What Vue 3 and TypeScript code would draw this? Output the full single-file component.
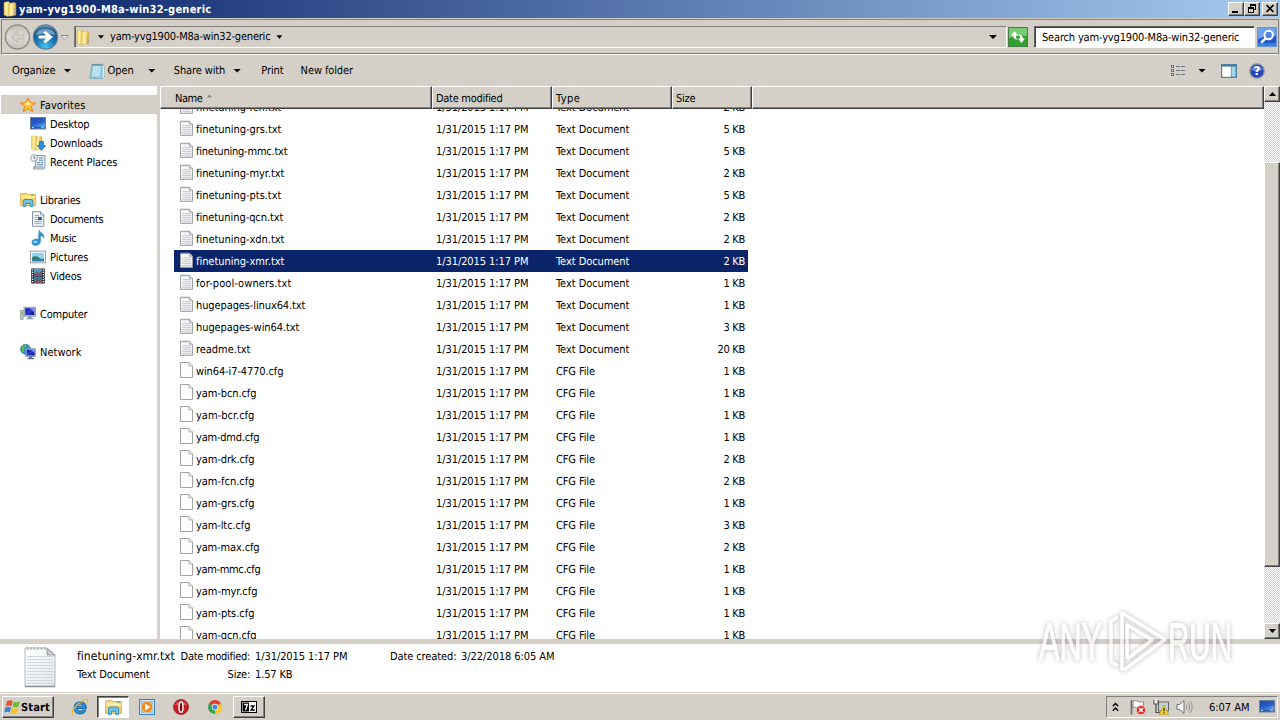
<script setup lang="ts">
interface FileRow {
  name: string
  w: number
  size: string
  cfg?: boolean
  selected?: boolean
}

// Spreads or tightens a label's letters so that it fills a given width.
const vFit = {
  mounted(el: HTMLElement, binding: { value: number }) {
    const range = document.createRange()
    range.selectNodeContents(el)
    const natural = range.getBoundingClientRect().width
    const count = (el.textContent ?? '').length
    if (count > 0) el.style.letterSpacing = `${(binding.value - 0.6 - natural) / count}px`
  },
}

const files: FileRow[] = [
  { name: 'finetuning-fcn.txt', w: 86, size: '2 KB' },
  { name: 'finetuning-grs.txt', w: 86, size: '5 KB' },
  { name: 'finetuning-mmc.txt', w: 92, size: '5 KB' },
  { name: 'finetuning-myr.txt', w: 89, size: '2 KB' },
  { name: 'finetuning-pts.txt', w: 86, size: '5 KB' },
  { name: 'finetuning-qcn.txt', w: 88, size: '2 KB' },
  { name: 'finetuning-xdn.txt', w: 89, size: '2 KB' },
  { name: 'finetuning-xmr.txt', w: 89, size: '2 KB', selected: true },
  { name: 'for-pool-owners.txt', w: 96, size: '1 KB' },
  { name: 'hugepages-linux64.txt', w: 110, size: '1 KB' },
  { name: 'hugepages-win64.txt', w: 104, size: '3 KB' },
  { name: 'readme.txt', w: 55, size: '20 KB' },
  { name: 'win64-i7-4770.cfg', w: 88, size: '1 KB', cfg: true },
  { name: 'yam-bcn.cfg', w: 61, size: '1 KB', cfg: true },
  { name: 'yam-bcr.cfg', w: 59, size: '1 KB', cfg: true },
  { name: 'yam-dmd.cfg', w: 64, size: '1 KB', cfg: true },
  { name: 'yam-drk.cfg', w: 59, size: '2 KB', cfg: true },
  { name: 'yam-fcn.cfg', w: 59, size: '2 KB', cfg: true },
  { name: 'yam-grs.cfg', w: 59, size: '1 KB', cfg: true },
  { name: 'yam-ltc.cfg', w: 55, size: '3 KB', cfg: true },
  { name: 'yam-max.cfg', w: 64, size: '2 KB', cfg: true },
  { name: 'yam-mmc.cfg', w: 65, size: '1 KB', cfg: true },
  { name: 'yam-myr.cfg', w: 62, size: '1 KB', cfg: true },
  { name: 'yam-pts.cfg', w: 59, size: '1 KB', cfg: true },
  { name: 'yam-qcn.cfg', w: 61, size: '1 KB', cfg: true },
]

interface NavItem { label: string; icon: string; w: number; root?: boolean; active?: boolean; gap?: boolean }
const nav: NavItem[] = [
  { label: 'Favorites', icon: 'star', w: 46, root: true, active: true },
  { label: 'Desktop', icon: 'desktop', w: 40 },
  { label: 'Downloads', icon: 'downloads', w: 53 },
  { label: 'Recent Places', icon: 'recent', w: 68 },
  { label: 'Libraries', icon: 'libraries', w: 41, root: true, gap: true },
  { label: 'Documents', icon: 'documents', w: 54 },
  { label: 'Music', icon: 'music', w: 27 },
  { label: 'Pictures', icon: 'pictures', w: 39 },
  { label: 'Videos', icon: 'videos', w: 32 },
  { label: 'Computer', icon: 'computer', w: 48, root: true, gap: true },
  { label: 'Network', icon: 'network', w: 42, root: true, gap: true },
]
</script>

<template>
  <div class="screen">
    <svg class="defs" width="0" height="0" aria-hidden="true">
      <defs>
        <linearGradient id="gFolder" x1="0" x2="1"><stop offset="0" stop-color="#f0cf55" /><stop offset=".45" stop-color="#fff3b0" /><stop offset="1" stop-color="#d9ac2c" /></linearGradient>
        <linearGradient id="gScreen" x1="0" y1="0" x2="1" y2="1"><stop offset="0" stop-color="#2450b8" /><stop offset=".55" stop-color="#2f72dc" /><stop offset="1" stop-color="#7cc0f0" /></linearGradient>
        <linearGradient id="gMon" x1="0" y1="0" x2="1" y2="1"><stop offset="0" stop-color="#10109a" /><stop offset=".5" stop-color="#2b3fd6" /><stop offset="1" stop-color="#0b0b78" /></linearGradient>
        <linearGradient id="gGrey" x1="0" y1="0" x2="0" y2="1"><stop offset="0" stop-color="#c3bfb8" /><stop offset=".5" stop-color="#dedbd6" /><stop offset="1" stop-color="#c4c0b9" /></linearGradient>
        <radialGradient id="gBlue" cx=".5" cy=".9" r=".9"><stop offset="0" stop-color="#45c3ee" /><stop offset=".45" stop-color="#1a78b4" /><stop offset=".8" stop-color="#1b5488" /><stop offset="1" stop-color="#7fa8c8" /></radialGradient>
        <linearGradient id="gPage" x1="0" y1="0" x2="1" y2="1"><stop offset="0" stop-color="#ffffff" /><stop offset="1" stop-color="#e4e7eb" /></linearGradient>
        <symbol id="folder" viewBox="0 0 16 16">
          <path d="M2 1.5 6.5.5 8 2v12l-2 1.500-4-1.500z" fill="url(#gFolder)" stroke="#d8b445" stroke-width=".5" />
          <path d="M7 2.500 12.500 1.500l1.300 1V14L8 15.200 6 14.500z" fill="url(#gFolder)" stroke="#d8b445" stroke-width=".5" />
          <path d="M11.800 7.500h2v6.200l-2 .4z" fill="#b9ad86" />
        </symbol>
        <symbol id="star" viewBox="0 0 16 16">
          <path d="M8 .8 10.100 5.600 15.400 6 11.300 9.400 12.800 14.800 8 11.900 3.200 14.800 4.700 9.400.6 6 5.900 5.600z" fill="#ffc629" stroke="#e8832a" stroke-width="1" stroke-linejoin="round" />
          <path d="M8 3 9.300 6.500 12.800 6.800 9 8 7 8 3.500 6.800 6.700 6.400z" fill="#fff09a" />
        </symbol>
        <symbol id="desktop" viewBox="0 0 16 16">
          <rect x=".5" y="1.500" width="15" height="11.500" fill="url(#gScreen)" stroke="#6d7f9b" />
          <path d="M1 2h14v5Q7 6 1 9z" fill="#1e45ac" opacity=".5" /><path d="M1 11.800h14" stroke="#2b4778" stroke-width="1.200" /><path d="M2 11.500h2" stroke="#9fe0ff" /><path d="M11 11.500h3" stroke="#8fb3dc" />
        </symbol>
        <symbol id="downloads" viewBox="0 0 16 16">
          <path d="M1.500 1.500 6 .7l1.200 1V14L5 15.200l-3.500-1z" fill="url(#gFolder)" stroke="#d8b445" stroke-width=".5" />
          <path d="M6.500 2.300 12 1.500V14l-5 1.100L5 14.500z" fill="url(#gFolder)" stroke="#d8b445" stroke-width=".5" />
          <path d="M9.500 6.500h4v4h2.200L11.500 15.500 7.300 10.500h2.200z" fill="#2a8fe0" stroke="#13609f" stroke-width=".7" />
        </symbol>
        <symbol id="recent" viewBox="0 0 16 16">
          <path d="M5.500 1.500h9.500v11l-1 2.500H3.500l1-2.500h1z" fill="#e6ecf1" stroke="#7f8c98" stroke-width=".9" />
          <circle cx="4" cy="4" r="3.300" fill="#f4f8fb" stroke="#8796a5" stroke-width=".9" /><path d="M4 2v2.200h1.700" fill="none" stroke="#456" stroke-width=".8" />
          <path d="M9 4h4M9 6.200h4M7 8.500h3M11 8.500h2M7 10.700h6" stroke="#5d8cb5" stroke-width="1.100" /><path d="M3.500 13h10" stroke="#7f8c98" stroke-width=".9" />
        </symbol>
        <symbol id="libraries" viewBox="0 0 16 16">
          <path d="M.6 13.500V1.800L6 1.100l1.400 1.300h8V13.500z" fill="#f2d56b" stroke="#c9a23a" stroke-width=".7" />
          <path d="M1.200 5.500h13.600M1.200 3.800h13.600" stroke="#fff8cf" stroke-width="1.100" /><path d="M11 3h3" stroke="#4ba36b" stroke-width="1" />
          <path d="M3.300 14.500V9.100Q3.300 7.500 5 7.500h6.200q1.600 0 1.600 1.600v5.400h-2.600v-3H6v3z" fill="#6fc0ea" stroke="#2b83ba" stroke-width=".8" />
        </symbol>
        <symbol id="documents" viewBox="0 0 16 16">
          <path d="M2.500.7h8L13.800 4v11.300H2.500z" fill="#fdfeff" stroke="#6f8294" stroke-width=".9" /><path d="M10.500.7V4h3.300" fill="#dce5ee" stroke="#6f8294" stroke-width=".7" />
          <path d="M4.300 4.500H9M4.300 6.500h2.500M4.300 8.500h2.500M4.300 10.700h7.500M4.300 12.700h7.500" stroke="#7e9ab8" stroke-width=".9" /><rect x="7.800" y="5.800" width="4" height="3.400" fill="#2c6296" />
        </symbol>
        <symbol id="music" viewBox="0 0 16 16">
          <path d="M9 .3c.6 2.600 5.600 3 4.700 7.600C13 5.800 11.200 5.500 10.400 5.400v6.100c0 2.200-2 3.900-4.600 3.900-2.300 0-3.900-1.100-3.900-2.900 0-2.200 2.300-3.700 4.700-3.500.8 0 1.300.2 1.900.5z" fill="#2d94da" stroke="#1d6faf" stroke-width=".5" /><ellipse cx="5.300" cy="12" rx="2.200" ry="1.300" fill="#8ed2f5" />
        </symbol>
        <symbol id="pictures" viewBox="0 0 16 16">
          <rect x=".6" y="2.100" width="14.800" height="11.700" fill="#fff" stroke="#8a9197" stroke-width=".9" /><rect x="2.200" y="3.700" width="11.600" height="8.500" fill="#8ed4ef" />
          <path d="M2.200 8Q6 6.300 9 8.700T13.800 9v3.200H2.200z" fill="#2c7d6f" /><path d="M2.200 10.600q5.800-1.400 11.600.3v1.300H2.200z" fill="#2583b6" />
        </symbol>
        <symbol id="videos" viewBox="0 0 16 16">
          <rect x="1.200" y=".5" width="13.600" height="15" fill="#232930" /><rect x="4" y="1" width="8" height="6.700" fill="#4d9fd2" /><rect x="4" y="8.500" width="8" height="6.500" fill="#397fae" />
          <path d="M4 6l3-3 2 2 3-2v4.700H4zM4 14l3-4 2 2 3-2v5H4z" fill="#7e5666" /><path d="M2.600 1.500v13.500M13.400 1.500v13.500" stroke="#fff" stroke-width="1.300" stroke-dasharray="1.200 1.100" />
        </symbol>
        <symbol id="computer" viewBox="0 0 16 16">
          <rect x=".6" y="4.500" width="2.600" height="9" fill="#b9c8b4" stroke="#7c8c80" stroke-width=".6" /><path d="M1.200 7h1.500" stroke="#3db93d" />
          <rect x="4" y="1.200" width="11.500" height="9" fill="#b6c1d6" stroke="#7887a8" stroke-width=".7" /><rect x="5.200" y="2.300" width="9.100" height="6.700" fill="url(#gMon)" /><path d="M9.500 2.300h4.800v3.800z" fill="#7b8ff0" />
          <path d="M8.200 10.300h3.200v1.800h2v1.200h-7v-1.200h1.800z" fill="#8793ad" />
        </symbol>
        <symbol id="network" viewBox="0 0 16 16">
          <circle cx="5.600" cy="5.300" r="5" fill="#2b86cf" stroke="#3c7199" stroke-width=".6" /><path d="M2 2.500q2-2.200 4.500-2L6 3 3.800 4.500 4.500 7.500 3 8.500Q1 6.500 2 2.500zM7.500 2l2.500 2-2 1z" fill="#55c155" />
          <rect x="5.800" y="4.800" width="9.700" height="7.700" fill="#9fb2d6" stroke="#7385ae" stroke-width=".6" /><rect x="6.800" y="5.800" width="7.700" height="5.600" fill="url(#gMon)" /><path d="M10.500 5.800h4v3z" fill="#7b8ff0" />
          <path d="M9 12.500h3.300v1.600h1.600v1.200H7.600v-1.200H9z" fill="#5b6c9c" />
        </symbol>
        <symbol id="txt" viewBox="0 0 13 16">
          <path d="M.5 1.300h9l3 2.900v11.200H.5z" fill="url(#gPage)" stroke="#96999c" stroke-width=".9" /><path d="M9.500 1.300v2.900h3" fill="#d9dde1" stroke="#96999c" stroke-width=".7" />
          <path d="M2 5.500h9M2 7.500h9M2 9.500h9M2 11.500h9M2 13.500h9" stroke="#b9cfdc" stroke-width=".9" /><path d="M2.200.8v1.600M4.200.8v1.600M6.200.8v1.600M8.200.8v1.600" stroke="#9da5ab" stroke-width=".9" />
        </symbol>
        <symbol id="cfg" viewBox="0 0 13 16">
          <path d="M.5.5h8.500l3.500 3.500v11.500H.5z" fill="#fdfdfd" stroke="#979797" stroke-width=".9" /><path d="M9 .5v3.500h3.500" fill="#ececec" stroke="#979797" stroke-width=".7" />
        </symbol>
      </defs>
    </svg>

    <header class="title">
      <svg class="title-icon" width="16" height="16"><use href="#folder" /></svg>
      <b class="low" v-fit="193">yam-yvg1900-M8a-win32-generic</b>
      <div class="winbtns">
        <i class="wb"><svg width="12" height="10"><path d="M2 7h6v2H2z" /></svg></i>
        <i class="wb"><svg width="12" height="10"><path d="M4 0h6v6H8V5h1V2H5v1H4z" /><path d="M2 3h6v6H2zm1 2v3h4V5z" fill-rule="evenodd" /></svg></i>
        <i class="wb last"><svg width="12" height="10"><path d="M2.500 1 9.500 8M9.500 1 2.500 8" stroke="#000" stroke-width="1.700" /></svg></i>
      </div>
    </header>

    <div class="navbar">
      <svg class="backfwd" width="70" height="28" viewBox="0 0 70 28">
        <circle cx="15.500" cy="14" r="12" fill="url(#gGrey)" stroke="#918d87" stroke-width="1.500" />
        <path d="M9.500 14l6-5.500v3.700h6.500v3.600h-6.500v3.700z" fill="#d4d0ca" stroke="#b4b0a9" stroke-width=".8" />
        <circle cx="43.500" cy="14" r="12.200" fill="url(#gBlue)" stroke="#66849c" stroke-width="1.200" />
        <path d="M33.500 12a10.500 9 0 0 1 20 0q-10-3-20 0z" fill="#b9d3e6" opacity=".55" />
        <path d="M36.500 12.500h7.500L41.300 9.600 43.500 8l7.500 6-7.500 6.200-2.200-1.700 2.700-2.900H36.500z" fill="#fff" />
        <path d="M59 12.500h7L62.500 16.300z" fill="#fff" stroke="#858079" stroke-width=".9" />
      </svg>
      <div class="address">
        <svg width="16" height="17" viewBox="0 0 16 16"><use href="#folder" /></svg>
        <i class="tri small first" /><span v-fit="161">yam-yvg1900-M8a-win32-generic</span><i class="tri small" />
        <i class="tri drop" />
      </div>
      <svg class="refresh" width="20" height="20" viewBox="0 0 20 20">
        <rect x=".5" y=".5" width="19" height="19" fill="#30a030" stroke="#4d7a4d" /><path d="M1 1h18v8Q10 8 1 11z" fill="#74cb74" />
        <path d="M6.500 4 10 8.500H7.800q0 2.500 1.700 4.300Q5 12 5.100 8.500H3zM13.500 16 10 11.500h2.200q0-2.500-1.700-4.300 4.500.8 4.400 4.300H17z" fill="#fff" />
      </svg>
      <div class="search"><span v-fit="198">Search yam-yvg1900-M8a-win32-generic</span></div>
      <svg class="lens" width="20" height="20" viewBox="0 0 20 20">
        <rect x=".5" y=".5" width="19" height="19" fill="#2257cc" stroke="#6f91cf" /><path d="M1 1h18v8Q10 8 1 12z" fill="#6fa0ee" />
        <path d="M1 16h18v3H1z" fill="#2a86e0" /><circle cx="11.700" cy="8" r="4.200" fill="#4a86e4" stroke="#fff" stroke-width="1.900" /><path d="M8.700 11.200 4.200 15.600" stroke="#fff" stroke-width="2.400" />
      </svg>
    </div>

    <div class="toolbar">
      <span v-fit="44">Organize</span><i class="tri t1" />
      <svg class="note" width="16" height="16" viewBox="0 0 16 16"><path d="M3 1.500h10.500l1.500 1V14l-1.500 1.500H1.500L1 14z" fill="#8cc7de" stroke="#7aa3b4" stroke-width=".8" /><path d="M4 3h8L11 13.500H2.600z" fill="#b7e1ef" /><path d="M4 .8v2M6 .8v2M8 .8v2M10 .8v2M12 .8v2" stroke="#607783" stroke-width=".9" /><path d="M14.300 3v11.500" stroke="#f7fbfc" stroke-width="1" /></svg>
      <span v-fit="27">Open</span><i class="tri t2" />
      <span class="share" v-fit="52">Share with</span><i class="tri t1" />
      <span class="print" v-fit="23">Print</span>
      <span class="newf" v-fit="53">New folder</span>
      <div class="tools-right">
        <svg width="17" height="14" viewBox="0 0 17 14"><g fill="#fff" stroke="#67717b"><rect x="1.500" y="1.500" width="2" height="2" /><rect x="1.500" y="5.500" width="2" height="2" /><rect x="1.500" y="9.500" width="2" height="2" /></g><path d="M6 2.500h4M11 2.500h4M6 6.500h4M11 6.500h4M6 10.500h4M11 10.500h4" stroke="#6c7782" /></svg>
        <i class="tri views" />
        <svg class="pane" width="16" height="14" viewBox="0 0 16 14"><rect x=".6" y=".6" width="14.800" height="12.800" fill="#fff" stroke="#45799d" stroke-width="1.100" /><path d="M1 1.800h14" stroke="#45799d" stroke-width="1.600" /><rect x="10.200" y="2.600" width="4.600" height="10.200" fill="#a5d8ed" stroke="#5b93b5" stroke-width=".8" /></svg>
        <svg class="help" width="16" height="16" viewBox="0 0 16 16"><circle cx="8" cy="8" r="7.200" fill="#2447b4" stroke="#8c93a5" stroke-width="1.300" /><path d="M2.200 7a6 5 0 0 1 11.600 0Q8 9 2.200 7z" fill="#6888dc" /><text x="8" y="12.400" text-anchor="middle" class="q">?</text></svg>
      </div>
    </div>

    <main class="body">
      <nav class="side">
        <div v-for="n in nav" :key="n.label" class="nav-item" :class="{ root: n.root, active: n.active, gap: n.gap }">
          <svg width="16" height="16"><use :href="'#' + n.icon" /></svg><span class="low" v-fit="n.w">{{ n.label }}</span>
        </div>
      </nav>
      <div class="splitter" />
      <section class="list">
        <div class="cols">
          <div class="col c-name"><span class="low" v-fit="28">Name</span><svg width="5" height="4"><path d="M0 3.500 2.500.5 5 3.500z" fill="#8b8780" /></svg></div>
          <div class="col c-date"><span class="low" v-fit="67">Date modified</span></div>
          <div class="col c-type"><span class="low" v-fit="25">Type</span></div>
          <div class="col c-size"><span class="low" v-fit="20">Size</span></div>
          <div class="col c-rest" />
        </div>
        <div class="rows">
          <div v-for="f in files" :key="f.name" class="row" :class="{ selected: f.selected }">
            <svg width="13" height="16"><use :href="f.cfg ? '#cfg' : '#txt'" /></svg>
            <div class="r-name"><span class="low" v-fit="f.w">{{ f.name }}</span></div>
            <div class="r-date"><span class="low" v-fit="93">1/31/2015 1:17 PM</span></div>
            <div class="r-type"><span v-if="f.cfg" class="low" v-fit="39.500">CFG File</span><span v-else class="low" v-fit="74">Text Document</span></div>
            <div class="r-size"><span class="low" v-fit="f.size.length > 4 ? 28 : 22">{{ f.size }}</span></div>
          </div>
        </div>
      </section>
      <div class="scroll">
        <div class="sbtn"><svg width="7" height="4"><path d="M0 4 3.500 0 7 4z" /></svg></div>
        <div class="thumb" />
        <div class="sbtn down"><svg width="7" height="4"><path d="M0 0h7L3.500 4z" /></svg></div>
      </div>
    </main>

    <footer class="details">
      <svg class="bigdoc" width="32" height="42" viewBox="0 0 32 42">
        <path d="M1 2h22l8 7v31.500H1z" fill="url(#gPage)" stroke="#b4b7ba" stroke-width="1" /><path d="M23 2v7h8z" fill="#c9cdd1" stroke="#8d9196" stroke-width=".8" />
        <path d="M3 10.500h26M3 13.500h26M3 16.500h26M3 19.500h26M3 22.500h26M3 25.500h26M3 28.500h26M3 31.500h26M3 34.500h26M3 37.500h26" stroke="#c7d0d9" stroke-width=".8" />
        <path d="M3.500 1v3M7 1v3M10.500 1v3M14 1v3M17.500 1v3M21 1v3" stroke="#adb2b7" stroke-width="1.300" /><path d="M1 40.500h30" stroke="#8a8e92" stroke-width="1.500" />
      </svg>
      <div class="d-col d-a"><div class="d-name"><span v-fit="98.500">finetuning-xmr.txt</span></div><div><span v-fit="73">Text Document</span></div></div>
      <div class="d-col d-b"><div><span v-fit="70">Date modified:</span></div><div><span v-fit="23">Size:</span></div></div>
      <div class="d-col d-c"><div><span v-fit="93">1/31/2015 1:17 PM</span></div><div><span v-fit="38">1.57 KB</span></div></div>
      <div class="d-col d-d"><div><span v-fit="67">Date created:</span></div></div>
      <div class="d-col d-e"><div><span v-fit="94">3/22/2018 6:05 AM</span></div></div>
    </footer>

    <div class="taskbar">
      <div class="start">
        <svg width="17" height="16" viewBox="0 0 17 16"><path d="M3 2.200Q6 .3 8.800 2L7.400 7.300Q4.800 5.800 1.600 7.400z" fill="#e5532c" /><path d="M9.800 2.400Q12.500 4 16 2.300L14.500 7.700Q11.500 9 8.400 7.600z" fill="#6cb83a" /><path d="M1.300 8.500Q4.400 7 7.100 8.400L5.700 13.600Q3 12 0 13.700z" fill="#3a86d8" /><path d="M8.100 8.700Q11.200 10.200 14.200 8.900L12.800 14.200Q9.700 15.500 6.700 13.900z" fill="#f6c230" /></svg>
        <b class="low" v-fit="29.500">Start</b>
      </div>
      <svg class="ql ie" width="18" height="18" viewBox="0 0 18 18"><path d="M15.300 10.500H6.300q.3 2.600 2.900 2.600 1.600 0 2.300-1.100h3.500q-1.300 4-5.900 4-6 0-6-6.200 0-6 6.100-6 6.300 0 6.100 6.700zM6.400 8.200h5.500Q11.600 6 9.200 6 6.800 6 6.400 8.200z" fill="#2593dc" stroke="#1462a8" stroke-width=".9" /><path d="M2 16.500Q-1 13.500 6 7 14 .2 16.500 1.800 17.500 2.500 16.200 5" fill="none" stroke="#e9b62d" stroke-width="1.300" /></svg>
      <div class="tbtn pressed"><svg width="17" height="17"><use href="#libraries" /></svg></div>
      <svg class="ql wmp" width="16" height="16" viewBox="0 0 16 16"><rect x=".5" y=".5" width="15" height="15" fill="#c8e3f6" stroke="#3783bd" /><rect x="2" y="2" width="12" height="12" fill="#8cc3e8" /><circle cx="8" cy="8" r="5.700" fill="#f18a1c" stroke="#fff0cf" stroke-width=".5" /><path d="M6 4.500 11.500 8 6 11.500z" fill="#fff" /></svg>
      <svg class="ql opera" width="16" height="16" viewBox="0 0 16 16"><circle cx="8" cy="8" r="7.500" fill="#c71f26" stroke="#8a1116" stroke-width=".7" /><path d="M2 6a6.500 5.500 0 0 1 12 0z" fill="#e36b6b" opacity=".7" /><ellipse cx="8" cy="8" rx="2" ry="5.300" fill="#7c0d12" stroke="#fff" stroke-width="1.400" /></svg>
      <svg class="ql chrome" width="14" height="14" viewBox="0 0 16 16"><path d="M8 8 1.100 4A8 8 0 0 1 14.900 4z" fill="#e0412f" /><path d="M8 8 14.900 4A8 8 0 0 1 8 16z" fill="#fbc926" /><path d="M8 8v8A8 8 0 0 1 1.100 4z" fill="#31a350" /><circle cx="8" cy="8" r="3.700" fill="#fff" /><circle cx="8" cy="8" r="2.900" fill="#4285e0" /></svg>
      <div class="tbtn zip"><svg width="16" height="12" viewBox="0 0 16 12"><rect width="16" height="12" /><rect x="1" y="1" width="14" height="10" fill="#fff" /><rect x="1.500" y="1.500" width="6.500" height="9" /><path d="M3 3.500h3.500L4.500 9" fill="none" stroke="#fff" stroke-width="1.300" /><path d="M9.500 5h3.500L10 9h3.800" fill="none" stroke="#000" stroke-width="1.300" /></svg></div>
      <div class="tray">
        <svg class="chev" width="7" height="10" viewBox="0 0 7 10"><path d="M.8 4.200 3.500 1.500 6.200 4.200M.8 8.700 3.500 6 6.200 8.700" fill="none" stroke="#000" stroke-width="1.400" /></svg>
        <svg class="flag" width="16" height="16" viewBox="0 0 16 16"><path d="M1.500 1v14.500" stroke="#686868" stroke-width="1.600" /><path d="M3 2q3-1 5 .4t5.500.2V9Q10 10 8 8.800T3 9z" fill="#fff" stroke="#77797b" stroke-width=".8" /><circle cx="11" cy="11" r="4.600" fill="#d92b25" stroke="#f6d8d5" stroke-width=".7" /><path d="M9 9l4 4M13 9l-4 4" stroke="#fff" stroke-width="1.500" /></svg>
        <svg class="net" width="16" height="16" viewBox="0 0 16 16"><rect x="5.500" y="3" width="10" height="9" fill="#c6ced6" stroke="#5d6770" /><path d="M1 1v4h4V1M3 5v8.500h4" fill="none" stroke="#4b4b4b" stroke-width="1.200" /><path d="M2.200 0v4.400M3.800 0v4.400" stroke="#fff" stroke-width="1" /><path d="M10.800 6 15.700 15.300H6.200z" fill="#f7d32b" stroke="#c19a18" stroke-width=".7" /><path d="M11 9v3.200M11 13.200v1.200" stroke="#222" stroke-width="1.200" /></svg>
        <svg class="vol" width="17" height="16" viewBox="0 0 17 16"><path d="M1 5.500h2.500L8 1.500v13l-4.500-4H1z" fill="#f3f3f3" stroke="#707070" /><path d="M10 5.500q1.700 2.500 0 5M12 3.700q3.200 4.300 0 8.600M14 2q4.300 6 0 12" fill="none" stroke="#8b8b8b" stroke-width=".9" /></svg>
        <span class="clock low" v-fit="41">6:07 AM</span>
        <svg class="show" width="16" height="16"><use href="#desktop" /></svg>
      </div>
    </div>

    <svg class="watermark" width="210" height="76" viewBox="0 0 210 76">
      <g class="wm">
        <text x="9" y="56" textLength="63" lengthAdjust="spacingAndGlyphs">ANY</text>
        <path d="M81 58V17l7-4M81 58l7 4M92 67V9L135 35.500 94 66M97 55V21L122 36 97 55" fill="none" stroke="#fff" stroke-width="3.500" stroke-linejoin="round" />
        <text x="138" y="56" textLength="64" lengthAdjust="spacingAndGlyphs">RUN</text>
      </g>
    </svg>
  </div>
</template>

<style>
html, body { margin: 0; overflow: hidden; background: #d4d0c8; }
</style>

<style scoped>
.screen { position: relative; width: 1280px; height: 720px; overflow: hidden; display: flex; flex-direction: column; background: #d4d0c8; color: #000; font-family: "DejaVu Sans Condensed", "DejaVu Sans", sans-serif; font-stretch: condensed; font-size: 11px; line-height: 14px; text-rendering: geometricPrecision; }
.screen * { box-sizing: border-box; }
.defs { position: absolute; }
svg { display: block; flex: none; }
span, b { display: inline-block; white-space: nowrap; flex: none; }
.low { padding-top: 2px; }
i { display: block; flex: none; }

.title { height: 18px; flex: none; display: flex; align-items: center; background: linear-gradient(90deg, #0a246a, #a6caf0); color: #fff; padding-left: 2px; }
.title-icon { margin-right: 1px; }
.winbtns { margin-left: auto; display: flex; padding-right: 2px; }
.wb { width: 16px; height: 14px; background: #d4d0c8; border: 1px solid; border-color: #fff #404040 #404040 #fff; box-shadow: inset -1px -1px #808080; display: flex; padding: 1px 0 0 1px; }
.wb.last { margin-left: 2px; }

.navbar { height: 36px; flex: none; display: flex; align-items: center; border-top: 1px solid #808080; border-bottom: 1px solid #fff; margin: 1px 1px 0 1px; border-left: 1px solid #808080; border-right: 1px solid #808080; box-shadow: inset 0 -1px #808080; padding-right: 1px; }
.backfwd { margin-right: 2px; }
.address { flex: 1; height: 22px; border: 1px solid; border-color: #808080 #fff #fff #808080; box-shadow: inset 1px 0 #606060; display: flex; align-items: center; }
.tri { width: 8px; height: 4px; background: #000; clip-path: polygon(0 0, 100% 0, 50% 100%); }
.tri.small { width: 6px; height: 3.5px; margin-left: 6px; }
.tri.first { margin: 0 6px 0 7px; }
.tri.drop { margin-left: auto; margin-right: 9px; }
.refresh { margin: 0 6px 0 1px; }
.search { width: 221px; height: 22px; background: #fff; border: 1px solid; border-color: #606060 #fff #fff #606060; box-shadow: inset 1px 1px #404040; padding: 4px 0 0 7px; margin-right: 2px; }

.toolbar { height: 31px; flex: none; display: flex; align-items: center; padding-left: 12px; }
.tri.t1 { margin: 0 0 0 8px; }
.note { margin: 0 2px 0 18px; }
.tri.t2 { margin-left: 14px; }
.share { margin-left: 18px; }
.print { margin-left: 20px; }
.newf { margin-left: 17px; }
.tools-right { margin-left: auto; display: flex; align-items: center; padding-right: 15px; }
.tri.views { margin: 0 15px 0 11px; }
.help { margin-left: 12px; }
.q { font: bold 12px "DejaVu Sans", sans-serif; fill: #fff; }

.body { flex: none; height: 553px; display: flex; background: #fff; border-top: 0; }
.side { width: 157px; flex: none; padding-top: 9px; background: #fff; }
.nav-item { height: 19px; display: flex; align-items: center; padding-left: 30px; gap: 4px; }
.nav-item.root { padding-left: 20px; }
.nav-item.active { background: #d4d0c8; margin-left: 1px; padding-left: 19px; }
.nav-item.gap { margin-top: 19px; }
.splitter { width: 3px; flex: none; background: #d4d0c8; }
.list { flex: 1; min-width: 0; display: flex; flex-direction: column; overflow: hidden; }
.cols { height: 23px; flex: none; display: flex; }
.col { border: 1px solid; border-color: #fff #404040 #404040 #fff; box-shadow: inset -1px -1px #808080; background: #d4d0c8; display: flex; align-items: center; padding-left: 3px; }
.c-name { width: 272px; padding-left: 14px; gap: 5px; }
.c-name svg { margin-bottom: 4px; }
.c-date, .c-type { width: 120px; }
.c-size { width: 80px; }
.c-rest { flex: 1; }
.rows { flex: 1; min-height: 0; overflow: hidden; display: flex; flex-direction: column; justify-content: flex-end; padding-left: 14px; width: 588px; margin-bottom: -7px; }
.row { height: 22px; flex: none; display: flex; align-items: center; padding-left: 6px; }
.row > svg { margin-bottom: 2px; }
.selected { background: #0a246a; color: #fff; }
.r-name { width: 243px; padding-left: 3px; }
.r-date { width: 120px; }
.r-type { width: 120px; }
.r-size { flex: 1; text-align: right; padding-right: 3px; }
.scroll { width: 16px; flex: none; display: flex; flex-direction: column; background: repeating-conic-gradient(#d4d0c8 0 25%, #fff 0 50%) 0 0 / 2px 2px; }
.sbtn { height: 16px; background: #d4d0c8; border: 1px solid; border-color: #fff #404040 #404040 #fff; box-shadow: inset -1px -1px #808080; display: flex; align-items: center; justify-content: center; }
.thumb { margin-top: 60px; height: 405px; background: #d4d0c8; border: 1px solid; border-color: #fff #404040 #404040 #fff; box-shadow: inset -1px -1px #808080; }
.down { margin-top: auto; }

.details { height: 54px; flex: none; background: #fff; border-top: 5px solid #d4d0c8; display: flex; }
.bigdoc { margin: 2px 0 0 24px; }
.d-col { padding-top: 4px; display: flex; flex-direction: column; flex: none; }
.d-col > div { height: 18px; line-height: 18px; }
.d-a { margin-left: 21px; width: 103px; }
.d-col > .d-name { font-size: 12px; line-height: 16px; }
.d-b { width: 70px; align-items: flex-end; }
.d-c { margin-left: 5px; width: 135px; }
.d-d { width: 67px; }
.d-e { margin-left: 4px; }

.taskbar { height: 27px; flex: none; border-top: 1px solid #fff; box-shadow: 0 -1px #d4d0c8; display: flex; align-items: center; padding-left: 2px; padding-right: 2px; }
.start { width: 52px; height: 22px; border: 1px solid; border-color: #fff #404040 #404040 #fff; box-shadow: inset -1px -1px #808080; display: flex; align-items: center; padding-left: 1px; gap: 0; }
.ie { margin-left: 17px; }
.tbtn { width: 32px; height: 22px; border: 1px solid; border-color: #fff #404040 #404040 #fff; box-shadow: inset -1px -1px #808080; display: flex; align-items: center; justify-content: center; }
.pressed { margin-left: 8px; background: #fff; border-color: #404040 #fff #fff #404040; box-shadow: inset 1px 1px #808080; }
.wmp { margin-left: 10px; }
.opera { margin-left: 18px; }
.chrome { margin-left: 19px; }
.zip { margin-left: 11px; }
.tray { margin-left: auto; width: 172px; height: 22px; border: 1px solid; border-color: #808080 #fff #fff #808080; display: flex; align-items: center; padding-left: 5px; }
.flag { margin-left: 11px; }
.net { margin-left: 7px; }
.vol { margin-left: 7px; }
.clock { margin-left: 16px; }
.show { margin-left: 10px; }

.watermark { position: absolute; left: 1030px; top: 604px; }
.wm { fill: #fff; stroke: #fff; stroke-width: 1.2; filter: drop-shadow(0 0 2.5px rgba(90, 90, 90, .6)); opacity: .72; font: 53px "Liberation Sans Narrow", "Liberation Sans", sans-serif; }
</style>
